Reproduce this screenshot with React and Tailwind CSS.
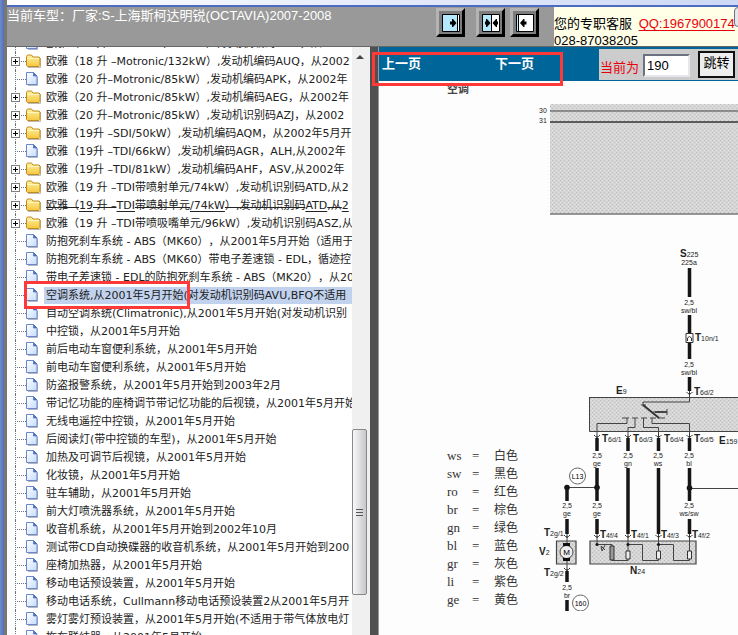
import { clsx } from 'clsx';

const TREE = [
  { text: '欧雅（18 升 –Motronic/110kW）,发动机编码AGN，从2002', type: 'file' },
  { text: '欧雅（18 升 –Motronic/132kW）,发动机编码AUQ，从2002', type: 'folder' },
  { text: '欧雅（20 升–Motronic/85kW）,发动机编码APK，从2002年', type: 'file' },
  { text: '欧雅（20 升–Motronic/85kW）,发动机编码AEG，从2002年', type: 'folder' },
  { text: '欧雅（20 升–Motronic/85kW）,发动机识别码AZJ，从2002', type: 'folder' },
  { text: '欧雅（19升 –SDI/50kW）,发动机编码AQM，从2002年5月开', type: 'folder' },
  { text: '欧雅（19升 –TDI/66kW）,发动机编码AGR，ALH,从2002年', type: 'file' },
  { text: '欧雅（19升 –TDI/81kW）,发动机编码AHF，ASV,从2002年', type: 'folder' },
  { text: '欧雅（19 升 –TDI带喷射单元/74kW）,发动机识别码ATD,从2', type: 'folder' },
  { text: '欧雅（19 升 –TDI带喷射单元/74kW）,发动机识别码ATD,从2', type: 'folder', hover: true },
  { text: '欧雅（19 升 –TDI带喷吸嘴单元/96kW）,发动机识别码ASZ,从', type: 'folder' },
  { text: '防抱死刹车系统 - ABS（MK60），从2001年5月开始（适用于', type: 'file' },
  { text: '防抱死刹车系统 - ABS（MK60）带电子差速锁 - EDL，循迹控', type: 'file' },
  { text: '带电子差速锁 - EDL的防抱死刹车系统 - ABS（MK20），从20', type: 'file' },
  { text: '空调系统,从2001年5月开始(对发动机识别码AVU,BFQ不适用', type: 'file', selected: true },
  { text: '自动空调系统(Climatronic),从2001年5月开始(对发动机识别', type: 'file' },
  { text: '中控锁，从2001年5月开始', type: 'file' },
  { text: '前后电动车窗便利系统，从2001年5月开始', type: 'file' },
  { text: '前电动车窗便利系统，从2001年5月开始', type: 'file' },
  { text: '防盗报警系统，从2001年5月开始到2003年2月', type: 'file' },
  { text: '带记忆功能的座椅调节带记忆功能的后视镜，从2001年5月开始', type: 'file' },
  { text: '无线电遥控中控锁，从2001年5月开始', type: 'file' },
  { text: '后阅读灯(带中控锁的车型)，从2001年5月开始', type: 'file' },
  { text: '加热及可调节后视镜，从2001年5月开始', type: 'file' },
  { text: '化妆镜，从2001年5月开始', type: 'file' },
  { text: '驻车辅助，从2001年5月开始', type: 'file' },
  { text: '前大灯喷洗器系统，从2001年5月开始', type: 'file' },
  { text: '收音机系统，从2001年5月开始到2002年10月', type: 'file' },
  { text: '测试带CD自动换碟器的收音机系统，从2001年5月开始到200', type: 'file' },
  { text: '座椅加热器，从2001年5月开始', type: 'file' },
  { text: '移动电话预设装置，从2001年5月开始', type: 'file' },
  { text: '移动电话系统，Cullmann移动电话预设装置2从2001年5月开', type: 'file' },
  { text: '雾灯雾灯预设装置，从2001年5月开始(不适用于带气体放电灯', type: 'file' },
  { text: '拖车联结器，从2001年5月开始', type: 'file' },
];

const COLOURS = [
  ['ws', '白色'],
  ['sw', '黑色'],
  ['ro', '红色'],
  ['br', '棕色'],
  ['gn', '绿色'],
  ['bl', '蓝色'],
  ['gr', '灰色'],
  ['li', '紫色'],
  ['ge', '黄色'],
];

function FolderIcon() {
  return (
    <svg width="15" height="14" viewBox="0 0 15 14" className="shrink-0">
      <path d="M2 13.5h12.5V4" fill="none" stroke="#bbb" />
      <path d="M.5 11.5v-9l1-1.5h4l1.5 2h6l1 1v7.5l-1 1h-11.500z" fill="url(#folder)" stroke="#c08a1c" />
      <path d="M1.500 4.500h11.500" stroke="#fff6c0" />
    </svg>
  );
}

function PageIcon() {
  return (
    <svg width="15" height="14" viewBox="0 0 15 14" className="shrink-0">
      <path d="M2 13.500h9.500V5" fill="none" stroke="#b4b4bc" />
      <path d="M.5.5h7l3.500 3.500v8.500H.5z" fill="url(#page)" stroke="#6c88cc" />
      <path d="M7.500.5V4H11z" fill="#5474c4" stroke="#4c68b4" strokeWidth=".7" />
    </svg>
  );
}

function Expander() {
  return (
    <svg width="9" height="9" className="relative shrink-0 bg-white" shapeRendering="crispEdges">
      <path d="M.5.5h8v8h-8z" fill="none" stroke="#808080" />
      <path d="M2 4.500h5M4.500 2v5" stroke="#000" />
    </svg>
  );
}

// Hovered labels: the rule sits higher under Chinese glyphs than under Latin ones
function HoverText({ text }) {
  return text.split(/([A-Za-z0-9/]+)/).map((part, i) => (
    <span
      key={i}
      className={clsx(
        'underline [text-decoration-skip-ink:none]',
        i % 2 ? 'underline-offset-2' : '-underline-offset-2'
      )}
    >
      {part}
    </span>
  ));
}

function TreeRow({ item }) {
  return (
    <li className="flex h-[18px] items-center pl-1 whitespace-nowrap">
      <span className="relative flex h-full w-[15px] shrink-0 items-center">
        <span className="absolute inset-y-0 left-1 border-l border-dotted border-gray-500" />
        <span className="absolute left-1 w-[11px] border-t border-dotted border-gray-500" />
        {item.type === 'folder' && <Expander />}
      </span>
      {item.type === 'folder' ? <FolderIcon /> : <PageIcon />}
      <a
        href="#"
        className={clsx(
          'ml-[3px] h-[17px] grow pl-[2px] leading-[18px]',
          item.selected && 'bg-[#c1d2ee]'
        )}
      >
        {item.hover ? <HoverText text={item.text} /> : item.text}
      </a>
    </li>
  );
}

function LayoutButton({ label, children }) {
  return (
    <button
      aria-label={label}
      className="flex size-[29px] shrink-0 items-center justify-center border-[3px] border-t-[#b4b4b4] border-r-black border-b-black border-l-[#b4b4b4] bg-[#7d7d7d]"
    >
      <svg width="18" height="18" viewBox="0 0 18 18" className="shrink-0">
        <path d="M.5.5h17v17H.5z" fill="#fff" stroke="#000" />
        {children}
      </svg>
    </button>
  );
}

function Header() {
  return (
    <header className="flex h-10 shrink-0 items-start border-b border-[#666] bg-[#999]">
      <h1 className="grow text-[13px] leading-[17px] text-white">
        当前车型：厂家:S-上海斯柯达明锐(OCTAVIA)2007-2008
      </h1>
      <div className="flex pt-px pr-[15px]">
        <LayoutButton label="显示右侧">
          <path d="M1 1h14v16H1z" fill="#b4e8fc" />
          <path d="M15.500 1v16" stroke="#000" />
          <path d="M8 7.500h2V5h1l3.500 4-3.500 4h-1v-2.500H8z" />
        </LayoutButton>
        <div className="ml-[11px] flex gap-[5px]">
          <LayoutButton label="左右平分">
            <path d="M1 1h8v16H1z" fill="#b4e8fc" />
            <path d="M9.500 1v16" stroke="#000" />
            <path d="M3 7.500h1V5h1l3.500 4L5 13H4v-2.500H3zM16 7.500h-1V5h-1l-3.500 4 3.500 4h1v-2.500h1z" />
          </LayoutButton>
          <LayoutButton label="显示左侧">
            <path d="M1 1h1v16H1z" fill="#b4e8fc" />
            <path d="M2.500 1v16" stroke="#000" />
            <path d="M10.500 7.500h-2V5h-1L4 9l3.500 4h1v-2.500h2z" />
          </LayoutButton>
        </div>
      </div>
      <div className="flex h-[39px] w-[184px] shrink-0 overflow-hidden bg-[#ffffe8]">
        <p className="w-[180px] shrink-0 pt-2 text-[13px] leading-[17px] whitespace-nowrap">
          您的专职客服{' '}
          <a href="#" className="ml-[3px] text-red-600 underline underline-offset-2">QQ:1967900174</a>
          <br />
          028-87038205
        </p>
        <button aria-label="更多" className="h-5 w-6 shrink-0 rounded border border-gray-500 bg-gray-200" />
      </div>
    </header>
  );
}

function Tree() {
  return (
    <nav className="relative flex w-[363px] shrink-0 bg-white">
      <div className="min-w-0 grow overflow-hidden text-[11px] text-[#222]">
        <ul className="-mt-[13px] font-['DejaVu_Sans','Noto_Sans_CJK_SC',sans-serif] [text-spacing-trim:space-all]">
          {TREE.map((item, i) => (
            <TreeRow key={i} item={item} />
          ))}
        </ul>
      </div>
      {/* Scrollbar */}
      <div className="flex w-[18px] shrink-0 flex-col bg-[#f0f0f0] pr-[3px]">
        <svg width="15" height="18" viewBox="0 0 15 18" className="shrink-0">
          <path d="M4 12l4-4 4 4z" fill="#444" />
        </svg>
        <div className="h-[364px] shrink-0" />
        <div className="flex h-[166px] shrink-0 items-center justify-center rounded-xs border border-[#888] bg-linear-to-r from-[#f8f8f8] to-[#c8c8cc]">
          <svg width="7" height="9" shapeRendering="crispEdges">
            <path d="M0 1.500h7M0 4.500h7M0 7.500h7" stroke="#555" />
          </svg>
        </div>
      </div>
      <div className="pointer-events-none absolute top-[234px] left-[17px] h-7 w-[166px] border-[3px] border-[#ff3838]" />
    </nav>
  );
}

function Toolbar() {
  return (
    <div className="relative flex h-[34px] shrink-0 items-center bg-[#069] text-[13px]">
      <div className="flex grow gap-[74px] pl-[3px] font-bold text-white">
        <a href="#">上一页</a>
        <a href="#">下一页</a>
      </div>
      <form className="flex h-[31px] w-[139px] shrink-0 items-center overflow-hidden bg-[#ccc]">
        <label htmlFor="page" className="w-11 shrink-0 pt-2 pl-px text-red-600">当前为</label>
        <input
          id="page"
          defaultValue="190"
          className="mt-[2px] h-[23px] w-[47px] shrink-0 border-2 border-t-gray-500 border-r-gray-200 border-b-gray-200 border-l-gray-500 bg-white pl-[2px] text-[13px]"
        />
        <button type="button" className="ml-2 h-[27px] w-[37px] shrink-0 border-2 border-[#111] bg-[#eee] pb-1 text-[13px] whitespace-nowrap">
          跳转
        </button>
      </form>
      <div className="pointer-events-none absolute top-[5px] -left-[7px] z-10 h-[34px] w-[191px] border-[3px] border-[#ff3838]" />
    </div>
  );
}

const WIRES = [
  'M689.500 268v29M689.500 315v18M689.500 343v16M689.500 377v16',
  'M597 438v13M628 438v13M658.500 438v13M689.500 438v13',
  'M597 468v33M628 468v67M658.500 468v67M689.500 468v33',
  'M567 487v14M567 519v16M597 519v16M689.500 519v16',
  'M567 571v11M567 600v11',
];

const THIN = [
  'M550 111h900M689.500 393v9H643v3M589 397.500h900M589.500 397v34.500h900',
  'M627 418v5.500h-30V438M635 418v9.500h-7V438M643.500 418v9.500h15V438M652 418v5.500h37.500V438',
  'M622 418h7M632 418h6M641 418h6M650 418h6M641 405h5M658 418h7M653 412h14M667 409v6',
  'M567 487.500h30M689.500 488.500h900M567 535v8M567 560v11',
  'M597 535v9.500h15v16h16V535M628 544.500h14.500v16h16V535M658.500 544.500h15v16h16V535',
  'M605 545l-3 6-1-5m0 0l4 4',
];

// [x, y, wire size, colour code]
const WIRE_LABELS = [
  [689, 305, '2,5', 'sw/bl'],
  [689, 367, '2,5', 'sw/bl'],
  [597, 458, '2,5', 'ge'],
  [628, 458, '2,5', 'gn'],
  [658, 458, '2,5', 'ws'],
  [689, 458, '2,5', 'bl'],
  [567, 508, '2,5', 'ge'],
  [597, 508, '2,5', 'ge'],
  [689, 508, '2,5', 'ws/sw'],
  [567, 590, '2,5', 'br'],
];

// [x, y, letter, suffix]
const PINS = [
  [695, 341, 'T', '10n/1'],
  [694, 395, 'T', '6d/2'],
  [616, 394, 'E', '9'],
  [602, 442, 'T', '6d/1'],
  [633, 442, 'T', '6d/3'],
  [664, 442, 'T', '6d/4'],
  [694, 442, 'T', '6d/5'],
  [719, 444, 'E', '159'],
  [544, 536, 'T', '2g/1'],
  [600, 538, 'T', '4f/4'],
  [631, 538, 'T', '4f/1'],
  [661, 538, 'T', '4f/3'],
  [692, 538, 'T', '4f/2'],
  [539, 555, 'V', '2'],
  [544, 576, 'T', '2g/2'],
  [630, 574, 'N', '24'],
  [680, 257, 'S', '225'],
];

const CONNECTORS = [
  [689.5, 393], [597, 436], [628, 436], [658.5, 436], [689.5, 436],
  [567, 536], [597, 536], [628, 536], [658.5, 536], [689.5, 536], [567, 569],
];

function Circuit() {
  return (
    <svg className="h-[530px] min-w-0 grow font-['Liberation_Sans',Arial,sans-serif]" role="img" aria-label="空调电路图">
      <defs>
        <pattern id="dots" width="4" height="4" patternUnits="userSpaceOnUse">
          <path d="M0 0h4v4H0z" fill="#d6d6d6" />
          <path d="M0 0h1v1H0zM2 2h1v1H2z" fill="#bcbcbc" />
          <path d="M2 0h1v1H2zM0 2h1v1H0z" fill="#e2e2e2" />
        </pattern>
      </defs>
      <g transform="translate(-538 -81)">
        <path d="M550 104h900v110H550zM590 398h900v33H590zM590 541h106v23H590zM556 541h20v23h-20z" fill="url(#dots)" />
        <path d="M550 214h900" stroke="#777" strokeWidth="1.500" />
        <path d="M550 122h900" stroke="#333" strokeWidth="1.500" />
        <path d="M590 541h106v23H590zM556.500 541h19.500v23h-19.500z" fill="none" stroke="#444" strokeWidth="1.200" />
        <g fill="none" stroke="#444">
          {THIN.map((d) => <path key={d} d={d} />)}
        </g>
        <path d="M643 405l16 13" stroke="#333" strokeWidth="2" />
        <path d="M655 412h12" stroke="#444" strokeWidth="2" />
        <g stroke="#161616" strokeWidth="3.500">
          {WIRES.map((d) => <path key={d} d={d} />)}
        </g>
        {CONNECTORS.map(([x, y]) => (
          <g key={`${x}-${y}`}>
            <path d={`M${x - 3} ${y - 2}h6v3h-6z`} fill="#fff" />
            <path d={`M${x - 3} ${y - 1}q3 4 6 0M${x} ${y - 2}v4`} fill="none" stroke="#333" />
          </g>
        ))}
        <path d="M686 333.500h7v9h-7z" fill="#fff" stroke="#333" />
        <path d="M687.500 341v-3q2-3 4 0v3" fill="none" stroke="#333" />
        {/* Resistors of N24 */}
        <path d="M610 546h4v14h-4z" fill="#999" stroke="#333" />
        <path d="M626 551h4v8h-4zM656.500 551h4v8h-4zM687.500 551h4v8h-4z" fill="#eee" stroke="#333" />
        <g fill="#161616">
          <circle cx="567" cy="487.500" r="2.800" />
          <circle cx="597" cy="487.500" r="2.800" />
          <circle cx="689.500" cy="488" r="2.800" />
          <circle cx="597" cy="544.500" r="1.600" />
          <circle cx="628" cy="544.500" r="1.600" />
          <circle cx="658.500" cy="544.500" r="1.600" />
        </g>
        {/* Blower motor */}
        <circle cx="566.500" cy="552" r="6.500" fill="#eee" stroke="#444" />
        <path d="M563 543h7v3h-7zM563 558h7v3h-7z" fill="#111" />
        <text x="566.500" y="555" fontSize="8" textAnchor="middle">M</text>
        <circle cx="577.500" cy="476" r="8" fill="#fff" stroke="#666" />
        <text x="577.500" y="479" fontSize="7" textAnchor="middle">L13</text>
        <circle cx="580.500" cy="603" r="8" fill="#fff" stroke="#666" />
        <text x="580.500" y="606" fontSize="7" textAnchor="middle">160</text>
        <g fontSize="7" fill="#222">
          <text x="539" y="113">30</text>
          <text x="539" y="123">31</text>
          <text x="689" y="265" textAnchor="middle">225a</text>
          {WIRE_LABELS.map(([x, y, size, code]) => (
            <text key={`${x}-${y}`} y={y} textAnchor="middle">
              <tspan x={x}>{size}</tspan>
              <tspan x={x} dy="8">{code}</tspan>
            </text>
          ))}
        </g>
        {PINS.map(([x, y, letter, suffix]) => (
          <text key={`${x}-${y}`} x={x} y={y} fontSize="10" fontWeight="bold" fill="#222">
            {letter}
            <tspan fontSize="7" fontWeight="normal">{suffix}</tspan>
          </text>
        ))}
      </g>
    </svg>
  );
}

function Diagram() {
  return (
    <main className="flex min-h-0 grow overflow-hidden bg-[#fdfdfd]">
      <div className="w-[159px] shrink-0 pl-[68px]">
        <h2 className="text-[11px] leading-4 font-bold text-[#444]">空调</h2>
        <table className="mt-[350px] text-left font-['Liberation_Serif','Noto_Sans_CJK_SC',serif] text-[13px] leading-[18px] text-[#333]">
          <tbody>
            {COLOURS.map(([code, name]) => (
              <tr key={code}>
                <th className="w-[25px] p-0 font-normal">{code}</th>
                <td className="w-[22px] p-0">=</td>
                <td className="p-0 text-xs leading-[18px] whitespace-nowrap">{name}</td>
              </tr>
            ))}
          </tbody>
        </table>
      </div>
      <Circuit />
    </main>
  );
}

export default function App() {
  return (
    <div className="flex h-screen overflow-hidden bg-white font-['Liberation_Sans','Noto_Sans_CJK_SC',sans-serif] text-black">
      <svg width="0" height="0" className="absolute">
        <defs>
          <linearGradient id="folder" x2="0" y2="1">
            <stop stopColor="#fff0a0" />
            <stop offset="1" stopColor="#f4c840" />
          </linearGradient>
          <linearGradient id="page" x2="1" y2="1">
            <stop stopColor="#fff" />
            <stop offset="1" stopColor="#c4dcfc" />
          </linearGradient>
        </defs>
      </svg>
      {/* Window frame */}
      <div className="w-[7px] shrink-0 border-r-[3px] border-[#777] bg-linear-to-r from-[#6d8ccc] to-[#5470b4]" />
      <div className="flex min-w-0 grow flex-col">
        <div className="h-[7px] shrink-0 border-b-2 border-[#4c6cc4] bg-linear-to-r from-white to-[#ccd8f4]" />
        <Header />
        <div className="flex min-h-0 grow">
          <Tree />
          <div className="w-[9px] shrink-0 border-r border-[#999] bg-[#505050]" />
          <div className="flex min-w-0 grow flex-col">
            <Toolbar />
            <Diagram />
          </div>
        </div>
      </div>
    </div>
  );
}
